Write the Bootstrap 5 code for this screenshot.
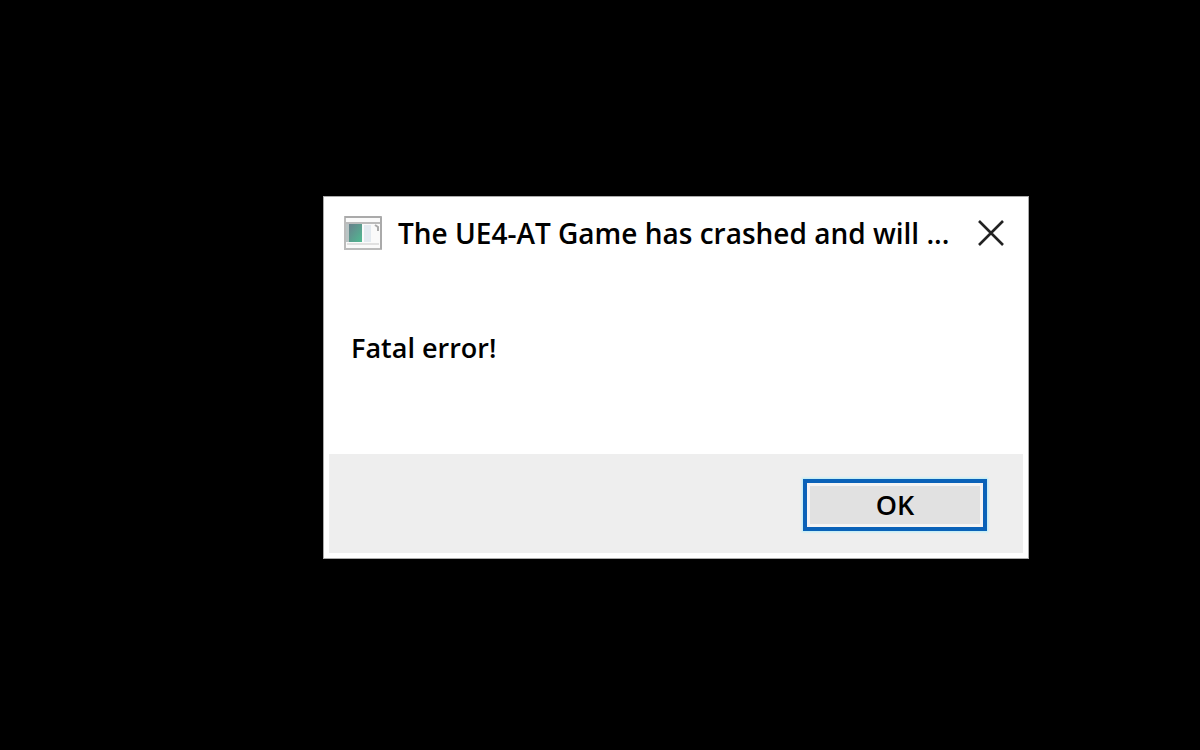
<!DOCTYPE html>
<html lang="en">
<head>
<meta charset="utf-8">
<meta name="viewport" content="width=device-width, initial-scale=1">
<title>Fatal error</title>
<link href="https://cdn.jsdelivr.net/npm/bootstrap@5.3.0/dist/css/bootstrap.min.css" rel="stylesheet">
<style>
  body { background: #000; color: #000; font-family: "Open Sans", "Noto Sans", sans-serif; }
  .desktop { padding: 4px 0 0 152px; }
  .crash-dialog { width: 100%; max-width: 706px; background: #fff; border: 1px solid #aaa; padding: 0 5px 5px; }
  .title-row { height: 72px; padding: 0 18px 0 15px; gap: 16px; }
  .title-text, .message, .ok-btn { font-size: 27px; line-height: 38px; font-weight: 600; }
  .title-text { font-size: 28px; }
  .close-btn { line-height: 0; }
  .message { height: 185px; padding: 60px 22px 0; }
  .actions { background: #eee; padding: 25px 36px 22px; }
  .ok-btn, .ok-btn:hover { width: 184px; height: 52px; color: #000; border: 4px solid #0a62b8; background: #e1e1e1; box-shadow: inset 0 0 0 3px #f4f4f4, 0 0 2px 1px #b4eefa; }
</style>
</head>
<body>
<main class="desktop min-vh-100 d-flex align-items-center justify-content-center">
  <section class="crash-dialog" role="alertdialog" aria-labelledby="dlg-title" aria-describedby="dlg-message">
    <header class="title-row d-flex align-items-center">
      <svg class="flex-shrink-0" width="38" height="34" viewBox="0 0 38 34" aria-hidden="true">
        <rect x="1" y="1" width="36" height="32" fill="#fafafa" stroke="#bbb" stroke-width="2"/>
        <path d="M1 1h36M37 1v32" stroke="#aaa" stroke-width="2"/>
        <path d="M2 7h34" stroke="#bbb" stroke-width="2"/>
        <defs><linearGradient id="pane" x2="1" y2="1"><stop stop-color="#68808c"/><stop offset="1" stop-color="#4fba91"/></linearGradient></defs>
        <rect x="2" y="8" width="3" height="18" fill="#b9c4c4"/>
        <rect x="5" y="8" width="13" height="18" fill="url(#pane)"/>
        <rect x="20" y="9" width="7" height="17" fill="#e3eaf0"/>
        <path d="M31 9l3 2v4" fill="none" stroke="#aaa" stroke-width="2"/>
        <path d="M3 28h32" stroke="#e0e0e0" stroke-width="2"/>
      </svg>
      <h1 id="dlg-title" class="title-text flex-grow-1 text-nowrap m-0">The UE4-AT Game has crashed and will ...</h1>
      <button type="button" class="close-btn border-0 bg-transparent p-0" aria-label="Close">
        <svg width="28" height="28" viewBox="0 0 28 28" aria-hidden="true"><path d="M2 2l24 24M26 2L2 26" stroke="#222" stroke-width="2.6"/></svg>
      </button>
    </header>
    <p id="dlg-message" class="message m-0">Fatal error!</p>
    <footer class="actions d-flex justify-content-end">
      <button type="button" class="ok-btn btn rounded-0 p-0">OK</button>
    </footer>
  </section>
</main>
<script src="https://cdn.jsdelivr.net/npm/bootstrap@5.3.0/dist/js/bootstrap.bundle.min.js"></script>
</body>
</html>
